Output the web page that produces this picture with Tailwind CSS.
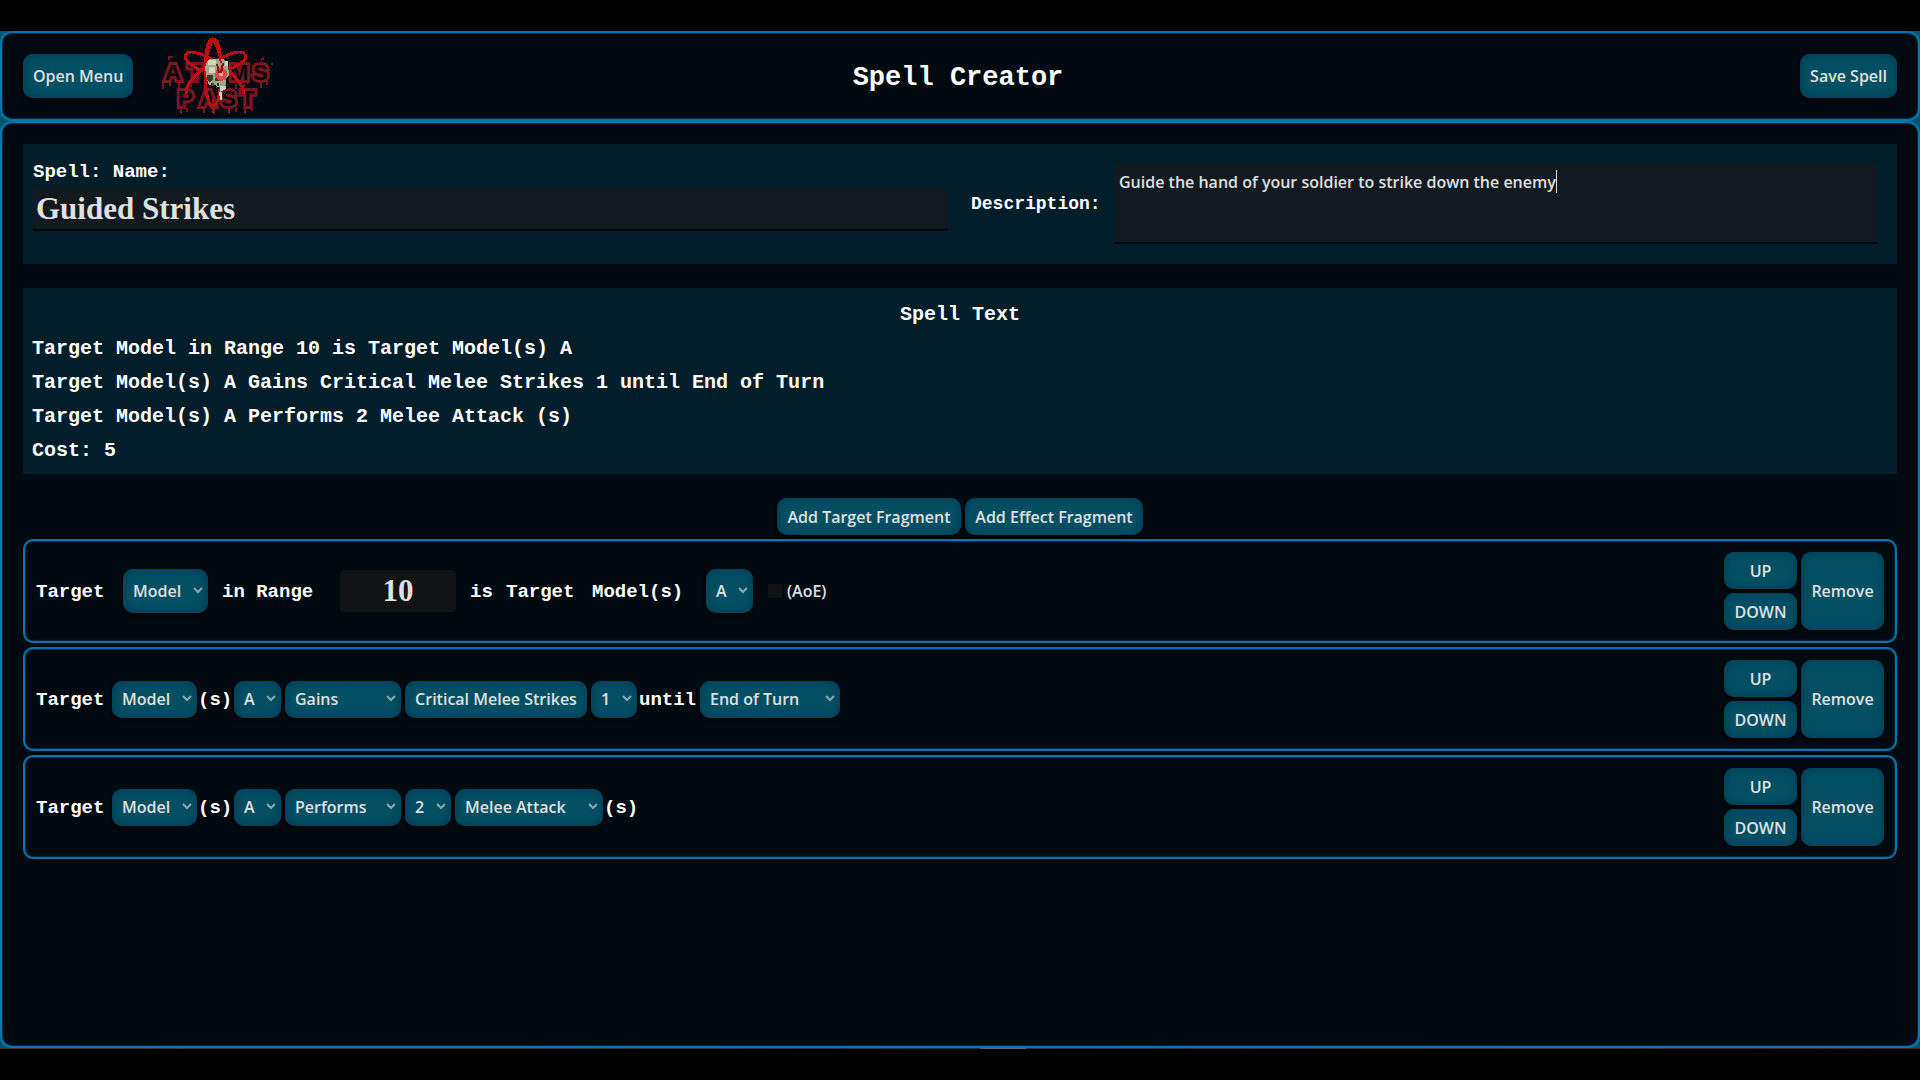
<!DOCTYPE html>
<html lang="en">
<head>
<meta charset="utf-8">
<title>Spell Creator</title>
<script src="https://cdn.jsdelivr.net/npm/@tailwindcss/browser@4"></script>
</head>
<body class="flex min-h-screen flex-col bg-black py-[31px] font-['Open_Sans',sans-serif] text-base font-semibold text-[#e0e0e0]">
<svg class="hidden">
  <symbol id="chevron" viewBox="0 0 10 7"><path d="M1 1l4 4 4-4" fill="none" stroke="#8ca7b1" stroke-width="2"/></symbol>
</svg>
<div class="flex flex-1 flex-col bg-[#00566a]">
  <header class="grid h-[90px] grid-cols-[1fr_auto_1fr] items-center rounded-[12px] border-2 border-[#0876b0] bg-[#000a10] px-[21px] shadow-[inset_0_0_2px_#0876b0]">
    <div class="flex items-center gap-6">
      <button class="h-11 rounded-[10px] bg-[#004f63] px-[10px] text-center shadow-[inset_0_0_8px_2px_#00405a,-1px_2px_3px_#000]">Open Menu</button>
      <svg class="h-20 w-[116px]" viewBox="158 36 116 80" role="img" aria-label="Atoms Past" shape-rendering="crispEdges">
        <g font-family="Liberation Sans" font-weight="bold" font-size="22" fill="#0a0709" stroke="#7c1524" stroke-width="6" paint-order="stroke" stroke-linejoin="miter" stroke-miterlimit="2">
          <text x="166" y="80">A</text><text x="189" y="80">T</text><text x="231" y="80">M</text><text x="254" y="80">S</text>
          <text x="179" y="106">P</text><text x="201" y="106">A</text><text x="222" y="106">S</text><text x="242" y="106">T</text>
        </g>
        <path d="M164 80v9M171 82v4M180 83v6M192 83v4M237 84v5M245 84v3M262 82v6M268 81v4M182 106v8M188 108v4M205 108v5M215 108v6M230 108v6M237 108v4M246 106v8M253 107v4M170 60v-3h4M262 60l3-2M272 64h2" stroke="#7c1524" stroke-width="2" fill="none"/>
        <g fill="none" stroke="#c00d12" stroke-width="3">
          <path d="M214 39c-5 0-8 13-8 33 0 19 3 34 8 34s8-15 8-34c0-20-3-33-8-33z"/>
          <path d="M187 54c4-5 18 0 32 9 15 9 26 23 26 31M187 54c-4 5 5 12 17 17"/>
          <path d="M246 54c-5-5-18 0-33 9-15 9-27 21-26 31M246 54c4 5-5 11-17 15"/>
        </g>
        <path d="M214 98v15" stroke="#a30d14" stroke-width="2"/>
        <path d="M210 59h15l4 5 1 11-3 3v6l-3 3h-5l-3-2h-6l-2-5-2-12 2-6z" fill="#a7a48c"/>
        <path d="M209 60h8v5h-8zM226 61h3v5h-3zM210 67h6v6h-6z" fill="#d8d3bb"/>
        <path d="M208 75h6v4l-3 3-3-2zM217 76l3 5h-4zM212 83h3v3h-3zM218 83h2v3h-2z" fill="#383c31"/>
        <path d="M221 86h6v3l-6 3zM220 92h3v8h-2z" fill="#c8cfc6"/>
        <path d="M217 70l6-4 5 6-1 8-7 1-4-5z" fill="#e8383a" opacity=".85"/>
        <path d="M220 72h4v4h-4z" fill="#ff9c95"/>
        <path d="M218 64l2 9M224 63l-2 10" stroke="#8e0c12" stroke-width="2"/>
        <path d="M206 64q3-12 8-25 6 12 8 24" stroke="#c00d12" stroke-width="2" fill="none"/>
      </svg>
    </div>
    <h1 class="pt-1 pr-1 font-['Liberation_Mono',monospace] text-[27px] leading-8 font-bold text-white">Spell Creator</h1>
    <div class="flex justify-end">
      <button class="h-11 rounded-[10px] bg-[#004f63] px-[10px] text-center shadow-[inset_0_0_8px_2px_#00405a,-1px_2px_3px_#000]">Save Spell</button>
    </div>
  </header>

  <main class="flex flex-1 flex-col rounded-[12px] border-2 border-[#0876b0] bg-[#000a10] px-[21px] pt-[21px] shadow-[inset_0_0_2px_#0876b0]">
    <section class="flex h-[120px] bg-[#021e2b] py-2 pr-5 pl-[10px]">
      <div class="flex flex-1 flex-col">
        <label for="name" class="flex h-9 items-center pt-1 font-['Liberation_Mono',monospace] text-[19px] font-bold text-white">Spell: Name:</label>
        <input id="name" value="Guided Strikes" class="h-[43px] w-full rounded-[3px] border-b-2 border-[#000a10] bg-[#101a1f] px-[3px] pt-[2px] font-['Liberation_Serif',serif] text-[31px] font-bold outline-none">
      </div>
      <div class="flex flex-1 items-start pt-3 pl-[14px]">
        <label for="desc" class="flex h-20 w-[153px] items-center pl-[9px] font-['Liberation_Mono',monospace] text-[18px] font-bold text-white">Description:</label>
        <div class="relative flex-1">
          <textarea id="desc" class="block h-20 w-full resize-none border-b-2 border-[#000a10] bg-[#101a1f] px-1 py-[7px] leading-[22px] outline-none">Guide the hand of your soldier to strike down the enemy</textarea>
          <span class="absolute top-[6px] left-[441px] h-[23px] w-px bg-[#e0e0e0]"></span>
        </div>
      </div>
    </section>

    <section class="mt-6 bg-[#021e2b] px-[9px] pt-[10px] pb-[6px] font-['Liberation_Mono',monospace] text-[20px] leading-[34px] font-bold text-white">
      <h2 class="text-center">Spell Text</h2>
      <p>Target Model in Range 10 is Target Model(s) A</p>
      <p>Target Model(s) A Gains Critical Melee Strikes 1 until End of Turn</p>
      <p>Target Model(s) A Performs 2 Melee Attack (s)</p>
      <p>Cost: 5</p>
    </section>

    <div class="mt-6 flex justify-center gap-1">
      <button class="h-[37px] w-[184px] rounded-[10px] bg-[#004f63] text-center shadow-[inset_0_0_8px_2px_#00405a,-1px_2px_3px_#000]">Add Target Fragment</button>
      <button class="h-[37px] w-[178px] rounded-[10px] bg-[#004f63] text-center shadow-[inset_0_0_8px_2px_#00405a,-1px_2px_3px_#000]">Add Effect Fragment</button>
    </div>

    <div id="fragments" class="mt-1 flex flex-col gap-1"></div>
  </main>
</div>
<div class="flex h-px justify-center bg-linear-to-r from-[#4a3426] via-[#0a3a48] to-[#5a1c1c]"><span class="ml-[85px] w-[46px] bg-[#56686c]"></span></div>
<script>
  const skin = 'rounded-[10px] bg-[#004f63] shadow-[inset_0_0_8px_2px_#00405a,-1px_2px_3px_#000]';
  const word = (t, cls = '') => `<span class="shrink-0 whitespace-nowrap pt-[3px] font-['Liberation_Mono',monospace] text-[19px] font-bold text-white ${cls}">${t}</span>`;
  const pick = (t, name, w, h = 'h-[37px]', cls = '') => `<span class="relative shrink-0 ${w} ${cls}"><select aria-label="${name}" class="block w-full appearance-none pl-[10px] outline-none ${h} ${skin}"><option>${t}</option></select><svg class="pointer-events-none absolute top-1/2 right-[5px] h-[7px] w-[10px] -translate-y-1"><use href="#chevron"/></svg></span>`;

  const fragments = [
    word('Target', 'w-[87px]') + pick('Model', 'Target kind', 'w-[85px]', 'h-11') +
    word('in Range', 'w-[132px] pl-[14px]') +
    `<input aria-label="Range" value="10" class="h-[42px] w-[116px] shrink-0 rounded-[3px] bg-[#101214] text-center font-['Liberation_Serif',serif] text-[31px] font-bold outline-none">` +
    word('is', 'w-[50px] pl-[14px]') + word('Target', 'w-[86px]') + word('Model(s)', 'w-[114px]') +
    pick('A', 'Group', 'w-[47px]', 'h-11') +
    `<label class="ml-[15px] flex items-center gap-[5px]"><input type="checkbox" class="size-[14px] appearance-none bg-[#101214]">(AoE)</label>`,

    word('Target', 'w-[76px]') + pick('Model', 'Target kind', 'w-[85px]') + word('(s)', 'w-[37px] pl-[1px]') +
    pick('A', 'Group', 'w-[47px]') + pick('Gains', 'Effect', 'w-[116px]', 'h-[37px]', 'ml-1') +
    `<button class="ml-1 h-[37px] w-[182px] shrink-0 text-center ${skin}">Critical Melee Strikes</button>` +
    pick('1', 'Amount', 'w-[46px]', 'h-[37px]', 'ml-1') + word('until', 'w-[63px] pl-[2px]') +
    pick('End of Turn', 'Duration', 'w-[140px]'),

    word('Target', 'w-[76px]') + pick('Model', 'Target kind', 'w-[85px]') + word('(s)', 'w-[37px] pl-[1px]') +
    pick('A', 'Group', 'w-[47px]') + pick('Performs', 'Effect', 'w-[116px]', 'h-[37px]', 'ml-1') +
    pick('2', 'Amount', 'w-[46px]', 'h-[37px]', 'ml-1') + pick('Melee Attack', 'Action', 'w-[148px]', 'h-[37px]', 'ml-1') +
    word('(s)', 'pl-[1px]')
  ];

  document.getElementById('fragments').innerHTML = fragments.map(body => `
    <article class="flex h-[104px] items-center rounded-[10px] border-2 border-[#0876b0] px-[11px] shadow-[inset_0_0_2px_#0876b0]">
      ${body}
      <div class="ml-auto flex gap-1">
        <div class="flex flex-col gap-1">
          <button class="h-[37px] w-[73px] text-center ${skin}">UP</button>
          <button class="h-[37px] w-[73px] text-center ${skin}">DOWN</button>
        </div>
        <button class="w-[83px] text-center ${skin}">Remove</button>
      </div>
    </article>`).join('');
</script>
</body>
</html>
